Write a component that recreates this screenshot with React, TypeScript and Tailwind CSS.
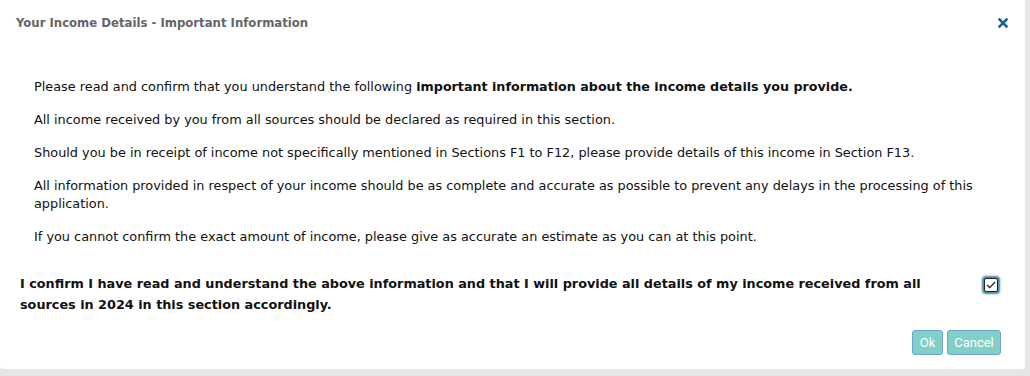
import React from "react";

const cond = { fontFamily: '"DejaVu Sans Condensed", "DejaVu Sans", sans-serif' };
const sans = { fontFamily: '"DejaVu Sans", Verdana, sans-serif' };

export default function App() {
  return (
    <div className="w-[1030px] h-[376px] bg-[#e6e6e6] overflow-hidden" style={sans}>
      <div className="w-[1025px] h-[369px] bg-white rounded-b-[4px] flex flex-col">
        <div className="h-[45px] flex items-center justify-between pl-[16px] pr-[17px]">
          <h4 className="text-[13px] font-bold text-[#666666]" style={cond}>
            Your Income Details - Important Information
          </h4>
          <button className="text-[#1b6690]" aria-label="close">
            <svg width="10" height="10" viewBox="0 0 10 10">
              <path d="M1.5 1.5 L8.5 8.5 M8.5 1.5 L1.5 8.5" stroke="currentColor" strokeWidth="2.6" strokeLinecap="square" />
            </svg>
          </button>
        </div>
        <div className="pt-[33px] pl-[34px] pr-[50px] text-[12.85px] leading-[18px] text-[#111111] flex flex-col gap-[15px]">
          <p>
            Please read and confirm that you understand the following{" "}
            <b className="text-[12.7px]">important information about the income details you provide.</b>
          </p>
          <p>All income received by you from all sources should be declared as required in this section.</p>
          <p>
            Should you be in receipt of income not specifically mentioned in Sections F1 to F12, please provide details of this income in Section F13.
          </p>
          <p>
            All information provided in respect of your income should be as complete and accurate as possible to prevent any delays in the processing of this application.
          </p>
          <p>If you cannot confirm the exact amount of income, please give as accurate an estimate as you can at this point.</p>
        </div>
        <div className="mt-[27px] pl-[20px] pr-[27px] flex items-start">
          <p className="w-[915px] text-[12.8px] leading-[21px] font-bold text-[#111111]">
            I confirm I have read and understand the above information and that I will provide all details of my income received from all sources in 2024 in this section accordingly.
          </p>
          <span className="ml-auto mt-[5px] w-[14px] h-[14px] border border-[#222] bg-white rounded-[2px] shadow-[0_0_2px_2px_#3f86a8] flex items-center justify-center">
            <svg width="10" height="8" viewBox="0 0 10 8">
              <path d="M1 4 L3.8 6.6 L9 1" fill="none" stroke="#222" strokeWidth="1.3" />
            </svg>
          </span>
        </div>
        <div className="mt-auto mb-[14px] pr-[24px] flex justify-end gap-[4px]" style={{ fontFamily: 'Roboto, "Liberation Sans", sans-serif' }}>
          <button className="h-[25px] w-[31px] bg-[#80d0c7] border border-[#6fa2d6] rounded-[3px] text-white text-[13px]">Ok</button>
          <button className="h-[25px] w-[54px] bg-[#80d0c7] border border-[#6fa2d6] rounded-[3px] text-white text-[13px]">Cancel</button>
        </div>
      </div>
    </div>
  );
}
